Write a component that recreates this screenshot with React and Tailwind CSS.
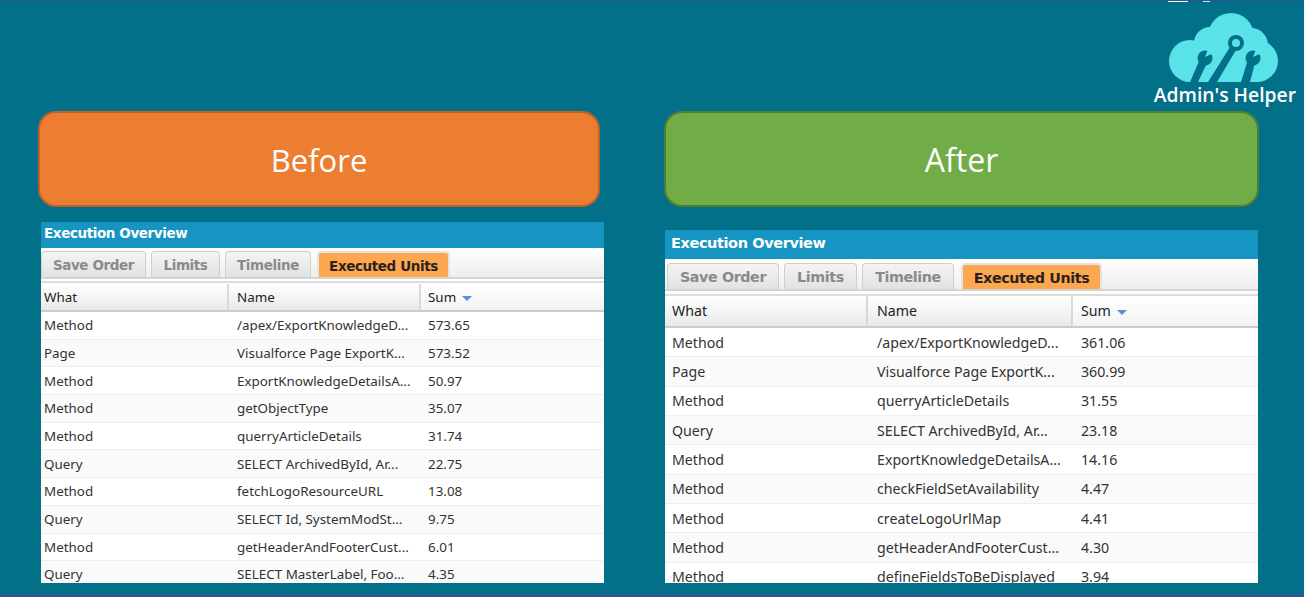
const BG = "#03708a";

const before = {
  rows: [
    ["Method", "/apex/ExportKnowledgeD...", "573.65"],
    ["Page", "Visualforce Page ExportK...", "573.52"],
    ["Method", "ExportKnowledgeDetailsA...", "50.97"],
    ["Method", "getObjectType", "35.07"],
    ["Method", "querryArticleDetails", "31.74"],
    ["Query", "SELECT ArchivedById, Ar...", "22.75"],
    ["Method", "fetchLogoResourceURL", "13.08"],
    ["Query", "SELECT Id, SystemModSt...", "9.75"],
    ["Method", "getHeaderAndFooterCust...", "6.01"],
    ["Query", "SELECT MasterLabel, Foo...", "4.35"],
  ],
  panel: "ml-[3px] mt-[15px] w-[563px] h-[361px]",
  title: "h-[26px] pl-[3px] pb-[3px] text-[13.5px]",
  strip: "h-[31px] pt-[3px] pl-0 gap-[5px] text-[13.5px]",
  tabs: ["w-[105px] pt-[2px]", "w-[69px] pt-[2px]", "w-[86px] pt-[2px]", "w-[133px] ml-[1px] pt-[2px]"],
  grid: "grid-cols-[188px_192px_1fr]",
  head: "h-[31px] mt-[2px] pt-[1px] text-[13.4px]",
  row: "h-[27.7px] text-[13.4px]",
  pad: ["pl-[3px]", "pl-[8px]", "pl-[7px]"],
};

const after = {
  rows: [
    ["Method", "/apex/ExportKnowledgeD...", "361.06"],
    ["Page", "Visualforce Page ExportK...", "360.99"],
    ["Method", "querryArticleDetails", "31.55"],
    ["Query", "SELECT ArchivedById, Ar...", "23.18"],
    ["Method", "ExportKnowledgeDetailsA...", "14.16"],
    ["Method", "checkFieldSetAvailability", "4.47"],
    ["Method", "createLogoUrlMap", "4.41"],
    ["Method", "getHeaderAndFooterCust...", "4.30"],
    ["Method", "defineFieldsToBeDisplayed", "3.94"],
  ],
  panel: "ml-[1px] mt-[23px] w-[593px] h-[353px]",
  title: "h-[29px] pl-[6px] pb-[2px] text-[14.5px]",
  strip: "h-[32px] pt-[4px] pl-[2px] gap-[5px] text-[14.3px]",
  tabs: ["w-[112px] pt-[3px]", "w-[73px] pt-[3px]", "w-[92px] pt-[3px]", "w-[141px] ml-[2px] pt-[3px]"],
  grid: "grid-cols-[203px_205px_1fr]",
  head: "h-[34px] mt-[3px] text-[14.2px]",
  row: "h-[29.35px] text-[14.2px]",
  pad: ["pl-[7px]", "pl-[9px]", "pl-[8px]"],
};

function Logo() {
  return (
    <div className="flex flex-col items-end pt-[8px] pr-[8px]">
      <svg width="120" height="78" viewBox="0 0 120 78" className="mr-[11px]">
        <g fill="#5ae2e9">
          <circle cx="25" cy="52" r="21" />
          <circle cx="45" cy="34" r="16" />
          <circle cx="66" cy="27" r="23" />
          <circle cx="86" cy="36" r="17" />
          <circle cx="92" cy="52" r="21" />
          <rect x="25" y="40" width="67" height="33" />
        </g>
        <rect x="0" y="73" width="120" height="5" fill={BG} />
        <g fill={BG}>
          {/* centre spanner with ring */}
          <path d="M65 38 L71 41 L52 73 L43 73 Z" />
          <circle cx="71" cy="34" r="8" />
          {/* left spanner */}
          <path d="M35 50 L42 54 L33 73 L25 73 Z" />
          <circle cx="40" cy="49" r="7.5" />
          {/* right spanner */}
          <path d="M83 50 L90 54 L85 73 L76 73 Z" />
          <circle cx="88" cy="49" r="7.5" />
        </g>
        <circle cx="71" cy="34" r="4" fill="#5ae2e9" />
        <path d="M40 48 L44 38 L51 43 Z" fill="#5ae2e9" />
        <path d="M88 48 L92 38 L99 43 Z" fill="#5ae2e9" />
      </svg>
      <span className="-mt-[3px] text-[19.3px] leading-[22px] font-semibold text-white whitespace-nowrap font-['Open_Sans',sans-serif]">
        Admin's Helper
      </span>
    </div>
  );
}

function Panel({ data }) {
  const names = ["Save Order", "Limits", "Timeline"];
  return (
    <div className={`overflow-hidden bg-white font-['Noto_Sans',sans-serif] ${data.panel}`}>
      <div className={`flex items-center bg-[#1795c2] font-bold text-white font-['DejaVu_Sans',sans-serif] tracking-[-0.4px] ${data.title}`}>
        Execution Overview
      </div>
      <div className={`flex border-b-2 border-[#d4d4d4] bg-gradient-to-b from-white to-[#eeeeee] font-bold font-['DejaVu_Sans',sans-serif] tracking-[-0.4px] ${data.strip}`}>
        {names.map((name, i) => (
          <div
            key={name}
            className={`flex items-center justify-center rounded-t-[4px] border border-b-0 border-[#cfcfcf] bg-gradient-to-b from-[#f4f4f4] to-[#e2e2e2] text-[#8a8a8a] ${data.tabs[i]}`}
          >
            {name}
          </div>
        ))}
        <div className={`flex items-center justify-center rounded-t-[4px] border-2 border-b-0 border-[#e4e4e4] bg-[#fda850] text-[#2a2220] ${data.tabs[3]}`}>
          Executed Units
        </div>
      </div>
      <div className={`grid border-y-2 border-t-[#dddddd] border-b-[#cccccc] text-[#222222] ${data.grid} ${data.head}`}>
        <div className={`flex items-center border-r-2 border-[#d9d9d9] bg-gradient-to-b from-white to-[#e9e9e9] ${data.pad[0]}`}>What</div>
        <div className={`flex items-center border-r-2 border-[#d9d9d9] bg-gradient-to-b from-white to-[#e9e9e9] ${data.pad[1]}`}>Name</div>
        <div className={`flex items-center gap-[6px] bg-gradient-to-b from-white to-[#f3f3f3] ${data.pad[2]}`}>
          Sum
          <span className="mt-[2px] h-0 w-0 border-x-[5px] border-t-[5px] border-x-transparent border-t-[#5b8fd0]" />
        </div>
      </div>
      {data.rows.map((row, i) => (
        <div
          key={i}
          className={`grid items-center border-b border-[#eeeeee] text-[#333333] ${data.grid} ${data.row} ${i % 2 ? "bg-[#fafafa]" : "bg-white"}`}
        >
          {row.map((cell, j) => (
            <div key={j} className={`whitespace-nowrap ${data.pad[j]}`}>{cell}</div>
          ))}
        </div>
      ))}
    </div>
  );
}

export default function App() {
  return (
    <div className="relative flex h-[597px] w-[1304px] flex-col overflow-hidden border-t border-b-[3px] border-t-[#2f5597] border-b-[#2f5597] bg-[#03708a]">
      {/* bits of white left over along the top edge */}
      <div className="absolute left-[1168px] top-0 h-[1px] w-[20px] bg-white" />
      <div className="absolute left-[1203px] top-0 h-[1px] w-[7px] bg-[#cfe6ec]" />
      <div className="flex h-[110px] justify-end">
        <Logo />
      </div>
      <div className="flex items-start pl-[38px]">
        <div>
          <div className="flex h-[96px] w-[562px] items-center justify-center rounded-[18px] border-2 border-[#b9622a] bg-[#ed7d31] pt-[2px] text-[31px] text-white font-['Open_Sans',sans-serif]">
            Before
          </div>
          <Panel data={before} />
        </div>
        <div className="ml-[60px]">
          <div className="flex h-[96px] w-[595px] items-center justify-center rounded-[18px] border-2 border-[#507e32] bg-[#70ad47] pt-[2px] text-[32px] text-white font-['Open_Sans',sans-serif]">
            After
          </div>
          <Panel data={after} />
        </div>
      </div>
    </div>
  );
}
